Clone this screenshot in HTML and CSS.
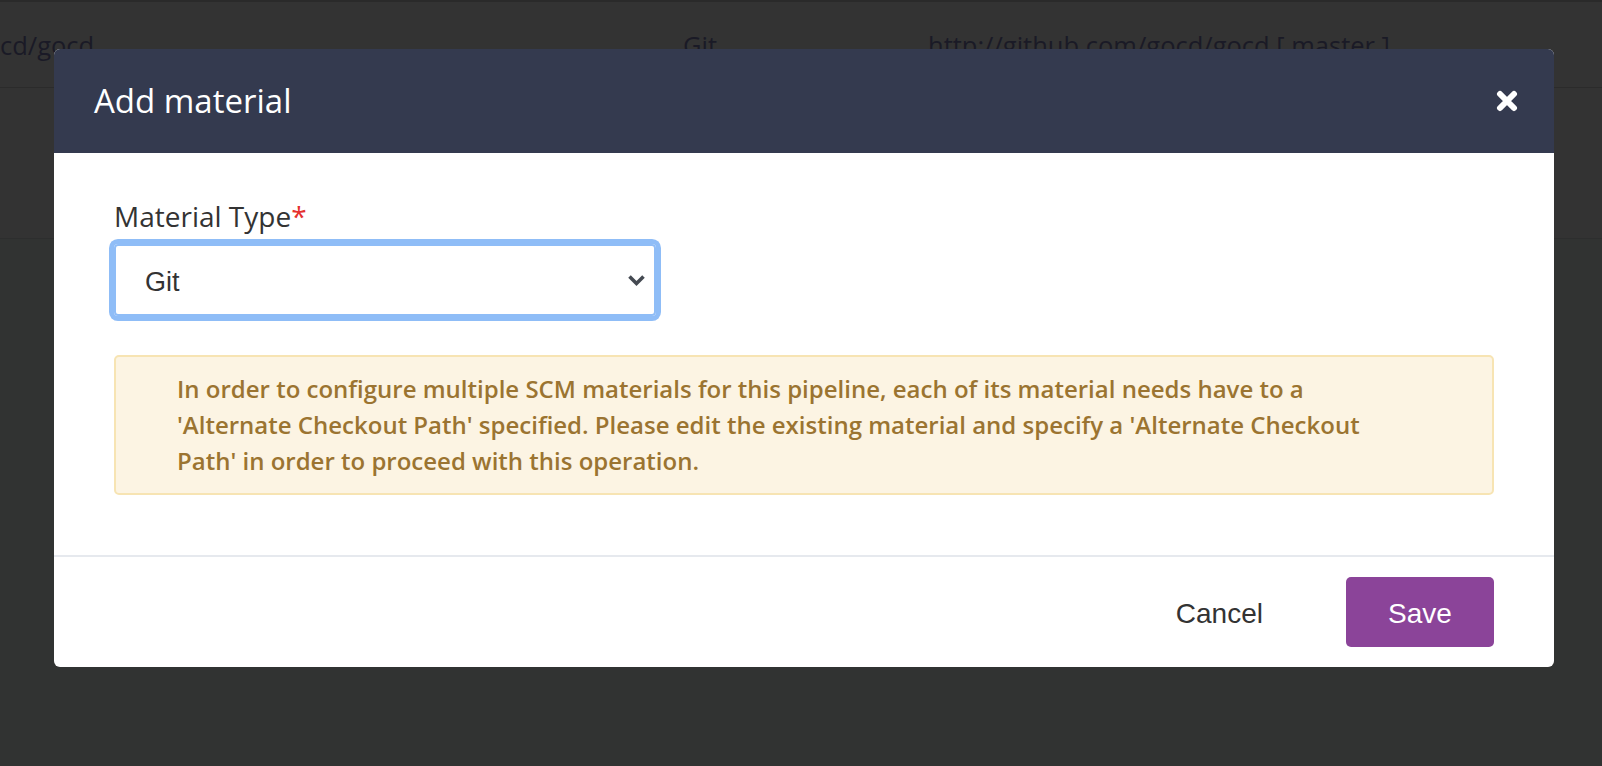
FILE: index.html
```html
<!DOCTYPE html>
<html lang="en">
<head>
<meta charset="utf-8">
<title>Add material</title>
<link rel="stylesheet" href="styles.css">
</head>
<body>
<div class="page">
  <div class="top-strip"></div>
  <div class="row">
    <div class="cell cell-name">cd/gocd</div>
    <div class="cell cell-type">Git</div>
    <div class="cell cell-url">http://github.com/gocd/gocd [ master ]</div>
  </div>
  <div class="row-empty"></div>
  <div class="rest"></div>
</div>

<div class="modal">
  <div class="modal-header">
    <h1 class="modal-title">Add material</h1>
    <button class="close-btn" aria-label="Close">
      <svg width="22" height="22" viewBox="0 0 22 22"><path d="M4 4 L18 18 M18 4 L4 18" stroke="#fff" stroke-width="6" stroke-linecap="round" fill="none"/></svg>
    </button>
  </div>
  <div class="modal-body">
    <label class="field-label">Material Type<span class="req">*</span></label>
    <div class="select">
      <span class="select-value">Git</span>
      <svg class="chevron" width="19" height="13" viewBox="0 0 19 13"><path d="M2.5 2.5 L9.5 9.5 L16.5 2.5" stroke="#454a52" stroke-width="3.6" fill="none" stroke-linecap="butt"/></svg>
    </div>
    <div class="alert">
      <p class="alert-text">In order to configure multiple SCM materials for this pipeline, each of its material needs have to a<br>'Alternate Checkout Path' specified. Please edit the existing material and specify a 'Alternate Checkout<br>Path' in order to proceed with this operation.</p>
    </div>
  </div>
  <div class="modal-footer">
    <button class="btn-cancel">Cancel</button>
    <button class="btn-save">Save</button>
  </div>
</div>
</body>
</html>
```

FILE: styles.css
```css
html, body {
  margin: 0;
  padding: 0;
}
body {
  width: 1602px;
  height: 766px;
  overflow: hidden;
  background: #313332;
  font-family: "Open Sans", "Liberation Sans", sans-serif;
  position: relative;
}

.page {
  display: flex;
  flex-direction: column;
}
.top-strip {
  height: 2px;
  background: #2a2a2a;
}
.row {
  height: 86px;
  background: #333333;
  border-bottom: 1px solid #2b2b2b;
  display: flex;
  align-items: flex-start;
  color: #1a1a26;
  font-size: 25.5px;
  line-height: 34px;
  padding-top: 26px;
  box-sizing: border-box;
}
.cell {
  white-space: nowrap;
}
.cell-name {
  width: 683px;
}
.cell-type {
  width: 245px;
}
.row-empty {
  height: 150px;
  background: #333333;
  border-bottom: 1px solid #2d2e2e;
}
.rest {
  flex: 1;
}

.modal {
  position: absolute;
  left: 54px;
  top: 49px;
  width: 1500px;
  background: #ffffff;
  border-radius: 6px;
  overflow: hidden;
}
.modal-header {
  height: 104px;
  background: #343a4f;
  display: flex;
  align-items: center;
  justify-content: space-between;
  padding: 0 36px 0 40px;
  box-sizing: border-box;
}
.modal-title {
  margin: 0;
  color: #ffffff;
  font-weight: 400;
  font-size: 33px;
  line-height: 40px;
}
.close-btn {
  background: none;
  border: 0;
  padding: 0;
  width: 22px;
  height: 22px;
  display: flex;
}

.modal-body {
  padding: 45px 60px 60px 60px;
  border-bottom: 2px solid #e6e9ee;
  display: flex;
  flex-direction: column;
  align-items: flex-start;
}
.field-label {
  font-size: 28px;
  line-height: 36px;
  color: #333333;
}
.req {
  color: #e5302e;
}
.select {
  margin-top: 10px;
  width: 542px;
  height: 72px;
  box-sizing: border-box;
  border: 2px solid #8fbdf7;
  border-radius: 4px;
  box-shadow: 0 0 0 5px #8fbdf7;
  display: flex;
  align-items: center;
  justify-content: space-between;
  padding: 0 8px 0 29px;
  font-family: "Liberation Sans", Arial, sans-serif;
  font-size: 27px;
  color: #333333;
}
.select-value {
  line-height: 30px;
  padding-top: 4px;
}
.chevron {
  display: block;
}
.alert {
  margin-top: 39px;
  align-self: stretch;
  background: #fcf4e3;
  border: 2px solid #f7e4b3;
  border-radius: 5px;
  padding: 14px 40px 14px 61px;
}
.alert-text {
  margin: 0;
  color: #9b7431;
  font-weight: 600;
  font-size: 24px;
  line-height: 36px;
  white-space: nowrap;
}

.modal-footer {
  height: 110px;
  display: flex;
  align-items: center;
  justify-content: flex-end;
  padding-right: 60px;
  gap: 83px;
}
.btn-cancel {
  background: none;
  border: 0;
  padding: 4px 0 0 0;
  font-family: "Liberation Sans", Arial, sans-serif;
  font-size: 28px;
  color: #333333;
}
.btn-save {
  width: 148px;
  height: 70px;
  border: 0;
  border-radius: 5px;
  background: #8b4499;
  color: #ffffff;
  font-family: "Liberation Sans", Arial, sans-serif;
  font-size: 28px;
  padding: 4px 0 0 0;
}
```
